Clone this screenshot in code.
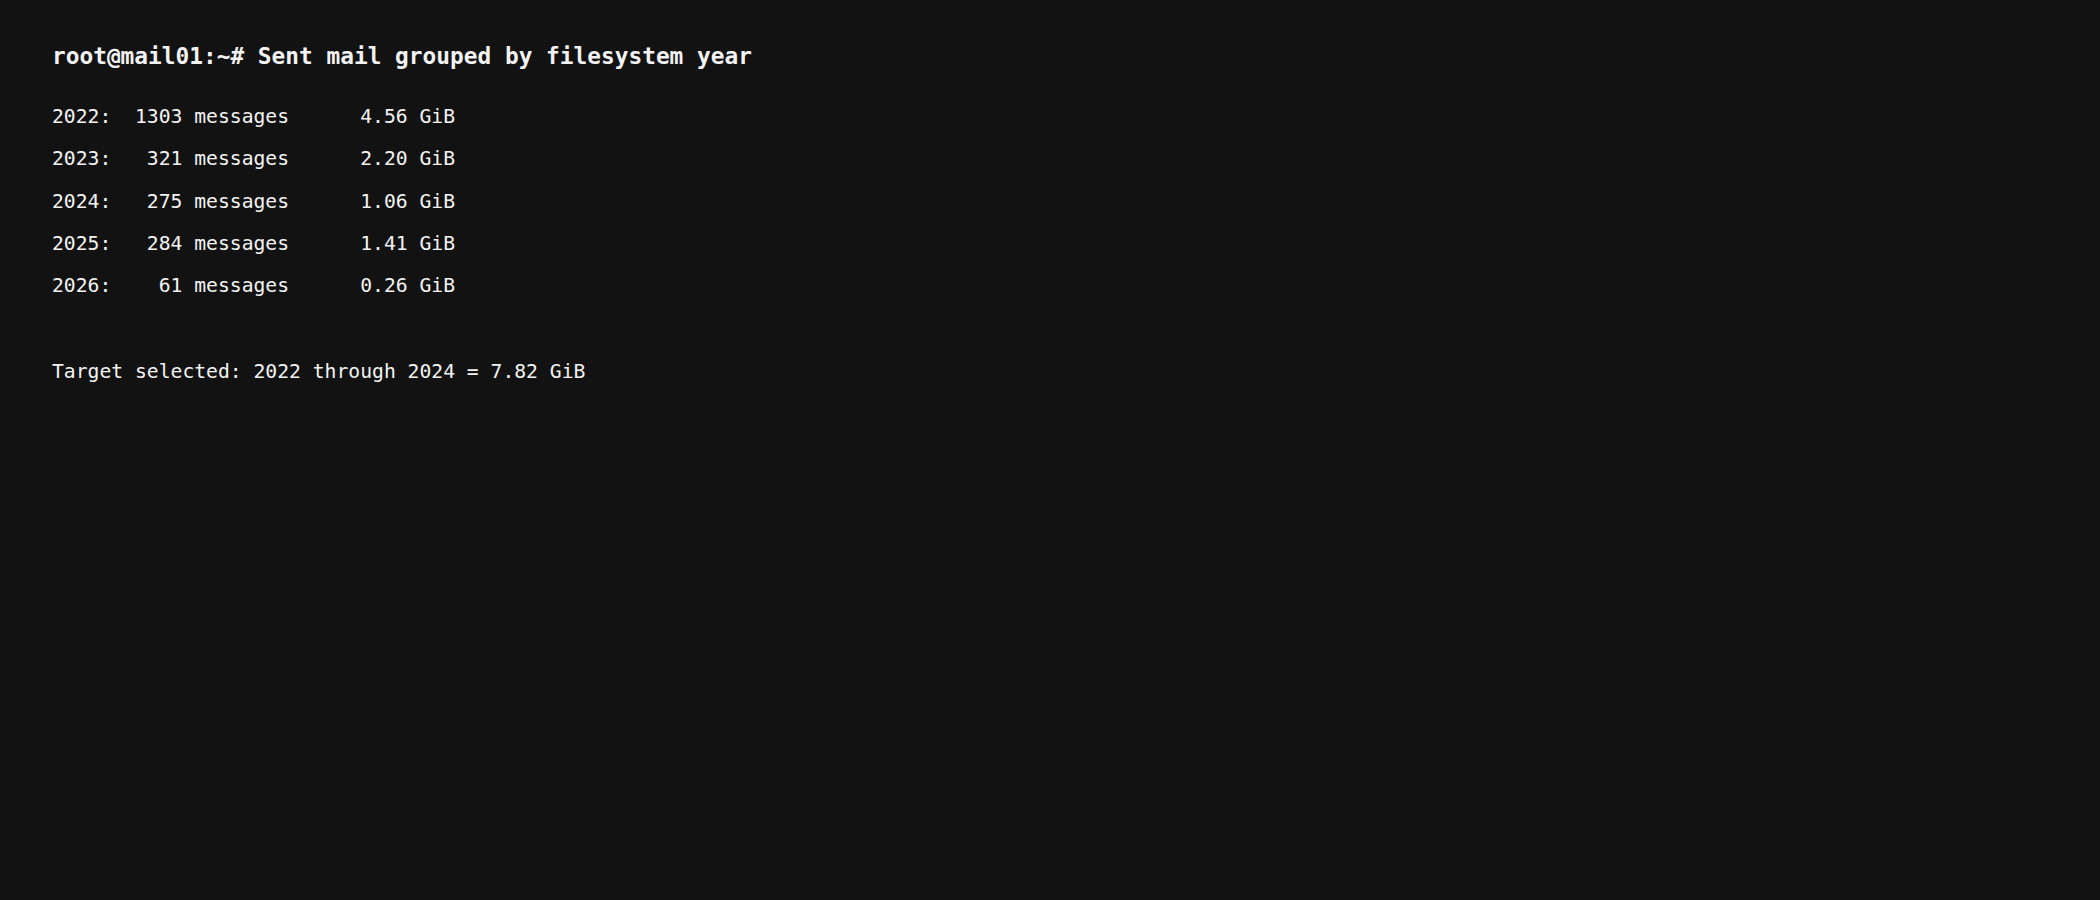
const rows = [
  { year: '2022', count: '1303', size: '4.56' },
  { year: '2023', count: '321', size: '2.20' },
  { year: '2024', count: '275', size: '1.06' },
  { year: '2025', count: '284', size: '1.41' },
  { year: '2026', count: '61', size: '0.26' }
];

const App = () => {
  return (
    <div className="min-h-screen w-full bg-[#121212] text-[#f2f2f2] font-['DejaVu_Sans_Mono',monospace] pl-[52px] pt-[42px]">
      <h1 className="text-[22.8px] leading-[28px] font-bold whitespace-pre">
        root@mail01:~# Sent mail grouped by filesystem year
      </h1>
      <div className="mt-[26px] text-[19.7px] leading-[42.3px] whitespace-pre">
        {rows.map((r) => (
          <div key={r.year}>
            {`${r.year}:  ${r.count.padStart(4, ' ')} messages      ${r.size} GiB`}
          </div>
        ))}
      </div>
      <p className="mt-[44px] text-[19.7px] leading-[42px] whitespace-pre">
        Target selected: 2022 through 2024 = 7.82 GiB
      </p>
    </div>
  );
};

export default App;
